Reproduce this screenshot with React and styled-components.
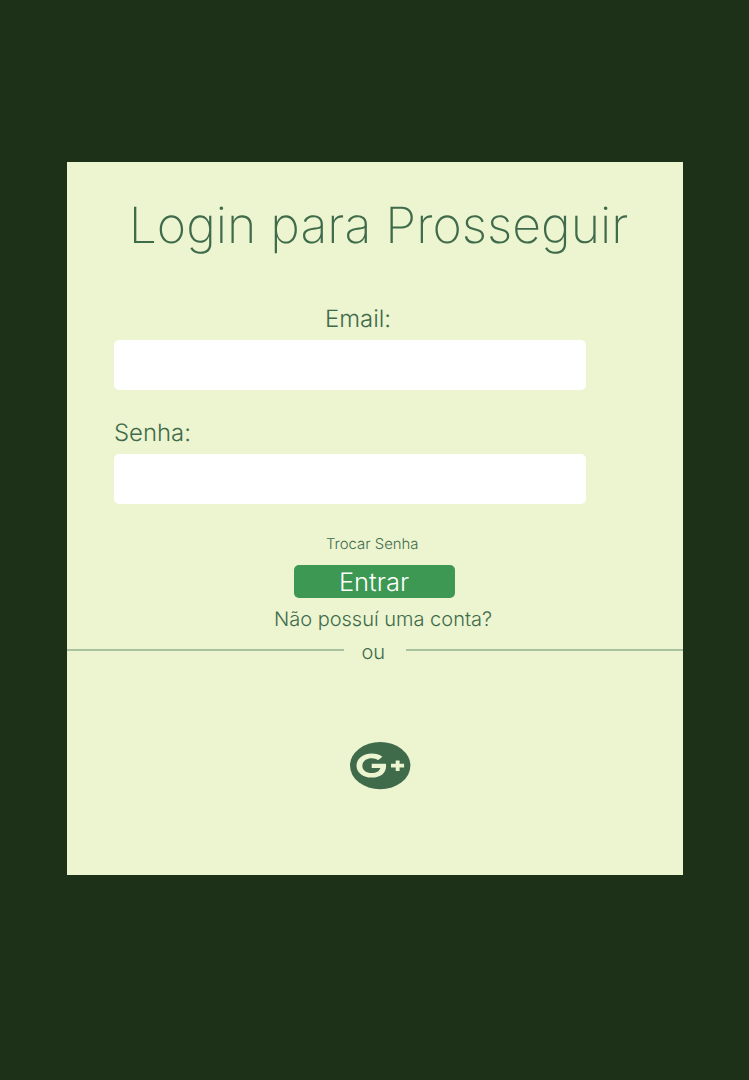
import React from "react";
import styled, { createGlobalStyle } from "styled-components";

const GlobalStyle = createGlobalStyle`
  *, *::before, *::after { box-sizing: border-box; }
  body {
    margin: 0;
    background: #1d3018;
    font-family: Inter, sans-serif;
    text-rendering: geometricPrecision;
  }
`;

const Page = styled.main`
  min-height: 1080px;
  padding: 162px 66px 0 67px;
  background: #1d3018;
`;

const Card = styled.section`
  display: flex;
  flex-direction: column;
  height: 713px;
  padding-top: 34px;
  background: #ecf4d0;
  color: #3f6b4b;
  font-weight: 300;
`;

const Title = styled.h1`
  margin: 0 0 48px 61.7px;
  font-size: 50px;
  line-height: 60px;
  font-weight: 200;
  white-space: nowrap;
`;

const Form = styled.form`
  display: flex;
  flex-direction: column;
  width: 472px;
  margin-left: 47px;
`;

const Field = styled.div`
  display: flex;
  flex-direction: column;
  gap: 6px;
  margin-bottom: 27.6px;
`;

const Label = styled.label`
  padding-left: ${({ $indent }) => $indent || 0}px;
  font-size: 23.9px;
  line-height: 30px;
  white-space: nowrap;
`;

const Input = styled.input`
  width: 100%;
  height: 50px;
  padding: 0 12px;
  border: 0;
  border-radius: 5px;
  background: #fff;
  font: 300 20px Inter, sans-serif;
`;

const ResetLink = styled.a`
  margin: 2.8px 0 0 212px;
  font-size: 14.9px;
  line-height: 20px;
  white-space: nowrap;
`;

const Submit = styled.button`
  width: 161px;
  height: 33px;
  margin: 11px 0 0 180px;
  padding: 1px 1px 0 0;
  border: 0;
  border-radius: 5px;
  background: #3c9852;
  color: #fff;
  font: 300 25.5px/34px Inter, sans-serif;
  text-rendering: inherit;
`;

const SignUp = styled.a`
  margin: 9px 0 0 207px;
  font-size: 20px;
  line-height: 24px;
  white-space: nowrap;
`;

const Divider = styled.div`
  display: grid;
  grid-template-columns: 277px 62px 277px;
  align-items: start;
  margin-top: 8px;
  height: 26px;
  font-size: 20px;
  line-height: 26px;
`;

const Rule = styled.span`
  height: 2px;
  margin-top: 10px;
  background: #a9c2a0;
`;

const Or = styled.span`
  padding-left: 17.5px;
`;

const GoogleButton = styled.a`
  width: 61px;
  height: 48px;
  margin: 77px 0 0 283px;
`;

const GooglePlus = () => (
  <svg width="61" height="48" viewBox="0 0 61 48" role="img" aria-label="Google Plus">
    <ellipse cx="30.2" cy="23.6" rx="30.2" ry="23.6" fill="#3f6b4b" />
    <path
      d="M21.7 21.7V26h8.7c-.9 3-4 5.1-8.7 5.1-5.4 0-9.4-3.3-9.4-7.4s4-7.4 9.4-7.4c2.6 0 4.7.7 6.3 1.9l4.4-3.5c-2.8-2-6.6-3.1-10.7-3.1-8.6 0-15.2 5.3-15.2 12.1s6.6 11.9 15.2 11.9c9 0 14.4-4.9 14.4-11.7 0-.8-.1-1.5-.3-2.2z"
      fill="#ecf4d0"
    />
    <path d="M45.7 18.4h3.9v3.4h4.5v3.7h-4.5v3.4h-3.9v-3.4h-4.7v-3.7h4.7z" fill="#ecf4d0" />
  </svg>
);

export default function App() {
  return (
    <>
      <GlobalStyle />
      <Page>
        <Card>
          <Title>Login para Prosseguir</Title>
          <Form onSubmit={(e) => e.preventDefault()}>
            <Field>
              <Label htmlFor="email" $indent={211}>Email:</Label>
              <Input id="email" type="email" />
            </Field>
            <Field>
              <Label htmlFor="senha">Senha:</Label>
              <Input id="senha" type="password" />
            </Field>
            <ResetLink>Trocar Senha</ResetLink>
            <Submit type="submit">Entrar</Submit>
          </Form>
          <SignUp>Não possuí uma conta?</SignUp>
          <Divider>
            <Rule />
            <Or>ou</Or>
            <Rule />
          </Divider>
          <GoogleButton>
            <GooglePlus />
          </GoogleButton>
        </Card>
      </Page>
    </>
  );
}
